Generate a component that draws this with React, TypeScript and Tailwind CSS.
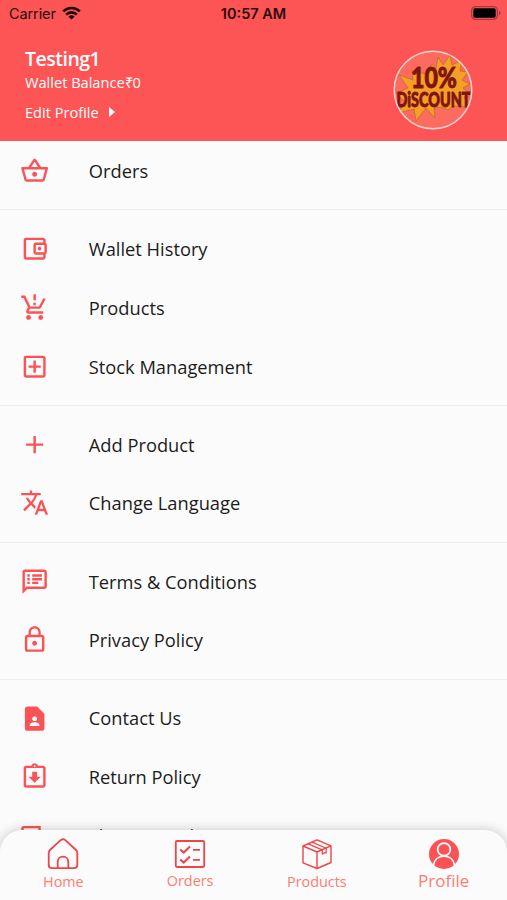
import React from "react";
import type { IconType } from "react-icons";
import {
  MdAdd,
  MdContactPage,
  MdLockOutline,
  MdOutlineAccountBalanceWallet,
  MdOutlineAddBox,
  MdOutlineAssignmentReturned,
  MdOutlineLocalShipping,
  MdOutlineShoppingBasket,
  MdOutlineSpeakerNotes,
  MdProductionQuantityLimits,
  MdTranslate,
} from "react-icons/md";

type MenuItem = { label: string; icon: IconType };

const menuGroups: MenuItem[][] = [
  [{ label: "Orders", icon: MdOutlineShoppingBasket }],
  [
    { label: "Wallet History", icon: MdOutlineAccountBalanceWallet },
    { label: "Products", icon: MdProductionQuantityLimits },
    { label: "Stock Management", icon: MdOutlineAddBox },
  ],
  [
    { label: "Add Product", icon: MdAdd },
    { label: "Change Language", icon: MdTranslate },
  ],
  [
    { label: "Terms & Conditions", icon: MdOutlineSpeakerNotes },
    { label: "Privacy Policy", icon: MdLockOutline },
  ],
  [
    { label: "Contact Us", icon: MdContactPage },
    { label: "Return Policy", icon: MdOutlineAssignmentReturned },
    { label: "Shipping Policy", icon: MdOutlineLocalShipping },
  ],
];

const StatusBar: React.FC = () => (
  <div className="grid h-[27px] grid-cols-3 items-center font-['Inter',sans-serif] text-[14.5px] text-[#2a0d0d]">
    <div className="flex items-center gap-1.5 pl-[9px]">
      <span className="tracking-[-0.1px]">Carrier</span>
      <svg viewBox="0 0 19 14" className="-mt-[2px] h-[14px] w-[19px]" fill="none" stroke="#1a0505" strokeWidth="2.7">
        <path d="M1.2 5.4a11.8 11.8 0 0 1 16.6 0" />
        <path d="M4.2 8.6a7.5 7.5 0 0 1 10.6 0" />
        <path d="M9.5 13.6 6.5 10.7a4.3 4.3 0 0 1 6 0z" fill="#1a0505" stroke="none" />
      </svg>
    </div>
    <span className="text-center font-semibold">10:57 AM</span>
    <div className="flex justify-end pr-[6px]">
      <svg viewBox="0 0 30 14" className="-mt-px h-[14px] w-[30px]">
        <rect x="0.6" y="0.6" width="25.8" height="12.8" rx="4" fill="none" stroke="#a33a3b" strokeWidth="1.2" />
        <rect x="2.3" y="2.3" width="22.4" height="9.4" rx="1.6" fill="#000" />
        <path d="M28 4.8v4.4c1-.4 1.6-1.2 1.6-2.2S29 5.2 28 4.8z" fill="#a33a3b" />
      </svg>
    </div>
  </div>
);

const Avatar: React.FC = () => (
  <svg viewBox="0 0 80 80" className="h-20 w-20">
    <defs>
      <clipPath id="avatar">
        <circle cx="40" cy="40" r="38.5" />
      </clipPath>
    </defs>
    <circle cx="40" cy="40" r="38.5" fill="#fc6b5f" />
    <g clipPath="url(#avatar)">
      <path
        d="M6 25 20 30 19 20 32 24 39 14 43 19 45 7 50 15 57 5 59 15 69 10 67 21 75 22 69 30 77 34 70 38 79 45 71 47 76 57 60 56 55 60 48 57 41 58 42 68 33 58 23 71 21 59 5 63 12 52 3 43 15 38z"
        fill="#f5a024"
        stroke="#b86a25"
        strokeWidth="0.7"
      />
      <g
        fontFamily="Lato, sans-serif"
        fontWeight="900"
        fill="#7f1512"
        stroke="#7f1512"
        strokeWidth="0.9"
        strokeLinejoin="round"
      >
        <text x="18" y="37.5" fontSize="29" textLength="46" lengthAdjust="spacingAndGlyphs">
          10%
        </text>
        <text x="3.5" y="56.5" fontSize="20.5" textLength="74" lengthAdjust="spacingAndGlyphs">
          DiSCOUNT
        </text>
      </g>
    </g>
    <circle cx="40" cy="40" r="38.8" fill="none" stroke="#fbd3d0" strokeWidth="1.5" />
  </svg>
);

const HomeIcon: React.FC = () => (
  <svg viewBox="0 0 32 32" className="h-8 w-8" fill="none" stroke="#ed4549" strokeWidth="1.8" strokeLinejoin="round">
    <path d="M1.7 15c0-1.3.4-2.1 1.3-3L12.8 2.8c2-1.9 4.4-1.9 6.4 0L29 12c.9.9 1.3 1.7 1.3 3v12c0 1.9-1.3 3.2-3.2 3.2H4.9c-1.9 0-3.2-1.3-3.2-3.2z" />
    <path d="M10.7 30v-6c0-3.2 2.2-5.3 5.3-5.3s5.3 2.1 5.3 5.3v6" />
  </svg>
);

const OrdersIcon: React.FC = () => (
  <svg viewBox="0 0 32 32" className="h-8 w-8" fill="none" stroke="#ed4549" strokeWidth="1.8">
    <rect x="1.8" y="3" width="28.4" height="26" rx="1.2" />
    <path d="m6.3 11.5 3.4 3 6.3-6M6.3 21.5l3.4 3 6.3-6" strokeWidth="2.1" />
    <path d="M19 11.8h7M19 21.8h7" />
  </svg>
);

const BoxIcon: React.FC = () => (
  <svg viewBox="0 0 32 32" className="h-8 w-8" fill="none" stroke="#ed4549" strokeWidth="1.4" strokeLinejoin="round">
    <path d="M2 8 16 1.8 30 7.8v16.7L16 30.5 2 24.8z" />
    <path d="m2 8 14 6 14-6.200M16 14v16.5" />
    <path d="m7 5.9 14.3 6v4.3l2-1.6 1.9.4v-4.7L11 4.1" strokeWidth="1.2" />
  </svg>
);

const ProfileIcon: React.FC = () => (
  <svg viewBox="0 0 32 32" className="h-8 w-8">
    <circle cx="16" cy="16" r="15" fill="#fb5355" />
    <g fill="none" stroke="#fff" strokeWidth="1.7">
      <circle cx="16" cy="11.4" r="6.3" />
      <path d="M5.5 27.2c.8-5.4 4.8-9 10.5-9s9.7 3.6 10.5 9" />
    </g>
  </svg>
);

const App: React.FC = () => {
  return (
    <div className="flex h-[900px] w-full flex-col overflow-hidden bg-[#fbfbfb] font-['Open_Sans',sans-serif]">
      <header className="h-[141px] shrink-0 bg-[#fd5456]">
        <StatusBar />
        <div className="flex justify-between pt-[18px] pr-[34px] pl-[25px] text-white">
          <div className="text-[14.6px] leading-5">
            <h1 className="text-[19.5px] leading-[27px] font-semibold tracking-[-0.5px]">Testing1</h1>
            <p>Wallet Balance₹0</p>
            <button className="mt-[10px] flex items-center gap-[10px]">
              Edit Profile
              <svg viewBox="0 0 6 10" className="h-[10px] w-[6px]" fill="currentColor">
                <path d="M0 0v10l6-5z" />
              </svg>
            </button>
          </div>
          <div className="mt-[5px]">
            <Avatar />
          </div>
        </div>
      </header>

      <main className="min-h-0 flex-1 overflow-hidden pt-[0.4px]">
        {menuGroups.map((group, i) => (
          <div key={i}>
            {i > 0 && (
              <div className="flex h-[19.6px] items-center">
                <div className="h-px w-full bg-[#efefef]" />
              </div>
            )}
            {group.map(({ label, icon: Icon }) => (
              <div key={label} className="flex h-[58.65px] items-center pl-[20.4px]">
                <Icon className="h-[29.3px] w-[29.3px] text-[#fb5355]" />
                <span className="ml-[39.1px] text-[18.3px] text-[#1c1c1c]">{label}</span>
              </div>
            ))}
          </div>
        ))}
      </main>

      <nav className="relative grid h-[70px] shrink-0 grid-cols-4 rounded-t-[22px] bg-[#fbfbfb] pt-2 text-[14.4px] leading-5 text-[#fb7d72] shadow-[0_0_12px_rgba(0,0,0,0.22)]">
        <div className="flex flex-col items-center gap-[2px]">
          <HomeIcon />
          <span>Home</span>
        </div>
        <div className="flex flex-col items-center gap-px">
          <OrdersIcon />
          <span>Orders</span>
        </div>
        <div className="flex flex-col items-center gap-[2px]">
          <BoxIcon />
          <span>Products</span>
        </div>
        <div className="flex flex-col items-center gap-px">
          <ProfileIcon />
          <span className="text-[17px]">Profile</span>
        </div>
      </nav>
    </div>
  );
};

export default App;
